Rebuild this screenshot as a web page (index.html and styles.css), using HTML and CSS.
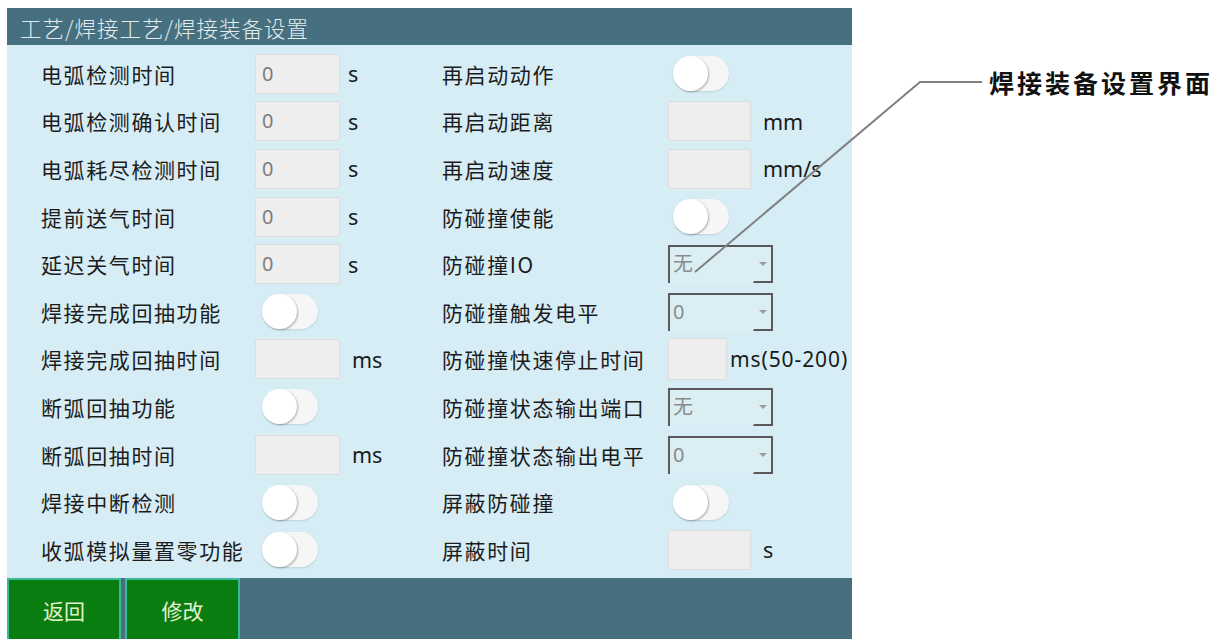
FILE: index.html
```html
<!DOCTYPE html>
<html lang="zh-CN">
<head>
<meta charset="utf-8">
<title>焊接装备设置</title>
<link rel="stylesheet" href="styles.css">
</head>
<body>
<div class="page">
  <div class="panel">
    <div class="titlebar">工艺/焊接工艺/焊接装备设置</div>
    <div class="form">
      <div class="lbl">电弧检测时间</div><div class="ctl"><div class="input">0</div></div><div class="unit">s</div>
      <div class="lbl">再启动动作</div><div class="ctl"><div class="toggle r"><span class="knob"></span></div></div><div class="unit"></div>

      <div class="lbl">电弧检测确认时间</div><div class="ctl"><div class="input">0</div></div><div class="unit">s</div>
      <div class="lbl">再启动距离</div><div class="ctl"><div class="input ri"></div></div><div class="unit">mm</div>

      <div class="lbl">电弧耗尽检测时间</div><div class="ctl"><div class="input">0</div></div><div class="unit">s</div>
      <div class="lbl">再启动速度</div><div class="ctl"><div class="input ri"></div></div><div class="unit">mm/s</div>

      <div class="lbl">提前送气时间</div><div class="ctl"><div class="input">0</div></div><div class="unit">s</div>
      <div class="lbl">防碰撞使能</div><div class="ctl"><div class="toggle r"><span class="knob"></span></div></div><div class="unit"></div>

      <div class="lbl">延迟关气时间</div><div class="ctl"><div class="input">0</div></div><div class="unit">s</div>
      <div class="lbl">防碰撞IO</div><div class="ctl"><div class="select"><span class="val">无</span><span class="btn"><span class="arrow"></span></span></div></div><div class="unit"></div>

      <div class="lbl">焊接完成回抽功能</div><div class="ctl"><div class="toggle"><span class="knob"></span></div></div><div class="unit"></div>
      <div class="lbl">防碰撞触发电平</div><div class="ctl"><div class="select"><span class="val">0</span><span class="btn"><span class="arrow"></span></span></div></div><div class="unit"></div>

      <div class="lbl">焊接完成回抽时间</div><div class="ctl"><div class="input"></div></div><div class="unit ms">ms</div>
      <div class="lbl">防碰撞快速停止时间</div><div class="ctl wide"><div class="input narrow"></div><span class="unit range">ms(50-200)</span></div>

      <div class="lbl">断弧回抽功能</div><div class="ctl"><div class="toggle"><span class="knob"></span></div></div><div class="unit"></div>
      <div class="lbl">防碰撞状态输出端口</div><div class="ctl"><div class="select"><span class="val">无</span><span class="btn"><span class="arrow"></span></span></div></div><div class="unit"></div>

      <div class="lbl">断弧回抽时间</div><div class="ctl"><div class="input"></div></div><div class="unit ms">ms</div>
      <div class="lbl">防碰撞状态输出电平</div><div class="ctl"><div class="select"><span class="val">0</span><span class="btn"><span class="arrow"></span></span></div></div><div class="unit"></div>

      <div class="lbl">焊接中断检测</div><div class="ctl"><div class="toggle"><span class="knob"></span></div></div><div class="unit"></div>
      <div class="lbl">屏蔽防碰撞</div><div class="ctl"><div class="toggle r"><span class="knob"></span></div></div><div class="unit"></div>

      <div class="lbl">收弧模拟量置零功能</div><div class="ctl"><div class="toggle"><span class="knob"></span></div></div><div class="unit"></div>
      <div class="lbl">屏蔽时间</div><div class="ctl"><div class="input ri"></div></div><div class="unit">s</div>
    </div>
    <div class="footer">
      <button class="fbtn">返回</button>
      <button class="fbtn">修改</button>
    </div>
  </div>

  <div class="annotation">
    <svg class="leader" width="1222" height="639" viewBox="0 0 1222 639">
      <polyline points="695,272 920,82 982,82" fill="none" stroke="#808080" stroke-width="2"/>
    </svg>
    <div class="note">焊接装备设置界面</div>
  </div>
</div>
</body>
</html>
```

FILE: styles.css
```css
* { box-sizing: border-box; }
html, body { margin: 0; padding: 0; background: #ffffff; }
body {
  width: 1222px;
  height: 639px;
  overflow: hidden;
  font-family: "Noto Sans CJK SC", "Noto Sans", sans-serif;
}
.page {
  position: relative;
  width: 1222px;
  height: 639px;
  padding: 8px 0 0 7px;
}
.panel {
  width: 845px;
  height: 631px;
  display: flex;
  flex-direction: column;
  background: #d6edf5;
}
.titlebar {
  height: 37px;
  background: #46707f;
  color: #e4ecef;
  font-size: 21.5px;
  letter-spacing: 1px;
  padding: 3px 0 0 13px;
  line-height: 34px;
  font-weight: 300;
}
.form {
  flex: 1;
  display: grid;
  grid-template-columns: 214px 93px 94px 226px 95px 1fr;
  grid-auto-rows: 47.6px;
  padding: 5px 0 0 34px;
  color: #1c1c1c;
}
.lbl {
  display: flex;
  align-items: center;
  font-size: 21px;
  letter-spacing: 1.6px;
  white-space: nowrap;
}
.ctl { display: flex; align-items: center; }
.ctl.wide { grid-column: span 2; gap: 3px; }
.unit {
  display: flex;
  align-items: center;
  font-family: "Noto Sans", "Open Sans", sans-serif;
  font-size: 21.5px;
  color: #1a1a1a;
  white-space: nowrap;
}
.unit.ms { padding-left: 4px; }
.unit.range { letter-spacing: 0.9px; font-size: 21px; }
.input {
  flex-shrink: 0;
  width: 85px;
  height: 40px;
  background: #eeeeee;
  border: 1px solid #dcdcdc;
  border-radius: 2px;
  color: #7d7d7d;
  font-family: "Noto Sans", "Open Sans", sans-serif;
  font-size: 20px;
  line-height: 38px;
  padding-left: 6px;
}
.input.ri { width: 83px; }
.input.narrow { width: 59px; height: 42px; }
.toggle {
  flex-shrink: 0;
  position: relative;
  width: 56px;
  height: 35px;
  margin-left: 7px;
  border-radius: 18px;
  background: #f6f6f6;
  box-shadow: 0 1px 2px rgba(0,0,0,0.12);
}
.toggle.r { margin-left: 5px; }
.knob {
  position: absolute;
  left: 0;
  top: 0;
  width: 35px;
  height: 35px;
  border-radius: 50%;
  background: #ffffff;
  box-shadow: 1px 1px 2px rgba(0,0,0,0.28);
}
.select {
  flex-shrink: 0;
  position: relative;
  width: 105px;
  height: 38px;
  display: flex;
  background: #dbeef4;
  border-top: 2px solid #5a5a5a;
  border-left: 2px solid #5a5a5a;
  border-right: 2px solid #5a5a5a;
}
.select .val {
  flex: 1;
  color: #8a8a8a;
  font-size: 20px;
  line-height: 34px;
  padding-left: 3px;
  font-family: "Noto Sans", "Noto Sans CJK SC", sans-serif;
}
.select .btn {
  width: 18px;
  height: 36px;
  border-left: 1px solid #e6eef1;
  border-bottom: 2px solid #5a5a5a;
  display: flex;
  align-items: center;
  justify-content: center;
}
.arrow {
  width: 0;
  height: 0;
  border-left: 4px solid transparent;
  border-right: 4px solid transparent;
  border-top: 4px solid #9a9a9a;
}
.footer {
  height: 61px;
  background: #476f7e;
  display: flex;
  gap: 4px;
}
.fbtn {
  width: 114px;
  height: 61px;
  background: #0a7d10;
  border: 2px solid #3cb89a;
  border-bottom: none;
  color: #e4f2cc;
  font-family: "Noto Sans CJK SC", sans-serif;
  font-size: 21px;
  padding: 0;
}
.fbtn + .fbtn { width: 115px; }
.annotation {
  position: absolute;
  left: 0;
  top: 0;
  width: 1222px;
  height: 639px;
  pointer-events: none;
}
.leader { position: absolute; left: 0; top: 0; }
.note {
  position: absolute;
  left: 989px;
  top: 65px;
  font-size: 25px;
  font-weight: 700;
  letter-spacing: 3px;
  color: #111111;
  line-height: 34px;
  white-space: nowrap;
}
```
